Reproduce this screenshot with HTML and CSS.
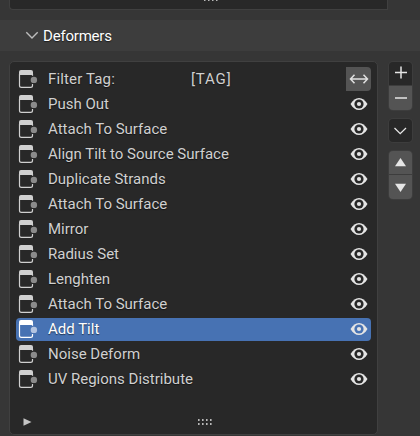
FILE: index.html
```
<!DOCTYPE html>
<html lang="en">
<head>
<meta charset="utf-8">
<title>Deformers</title>
<link rel="stylesheet" href="styles.css">
</head>
<body>
<svg class="defs" aria-hidden="true">
  <symbol id="node" viewBox="0 0 20 20">
    <path d="M1 6V3Q1 1 3 1H13Q15 1 15 3V6Z" fill="currentColor"/>
    <path d="M1.500 5V16.500Q1.500 18.400 3.400 18.400H12.600Q14.500 18.400 14.500 16.500V15M14.500 5v1.800" fill="none" stroke="currentColor" stroke-width="1.200"/>
    <circle class="socket" cx="15.900" cy="10.900" r="3.200"/>
  </symbol>
  <symbol id="eye" viewBox="0 0 18 14">
    <path d="M.5 7C3 3 5.600 1 9 1s6 2 8.500 6C15 11 12.400 13 9 13S3 11 .5 7Z" fill="currentColor"/>
    <circle class="hole" cx="9" cy="7" r="4.600"/>
    <circle cx="9" cy="7" r="2.100" fill="currentColor"/>
  </symbol>
</svg>
<div class="previous"><div class="previous-box"><svg class="grip" viewBox="0 0 14 6"><path d="M0 4h1.500v2H0zM4 4h1.500v2H4zM8 4h1.500v2H8zM12 4h1.500v2h-1.500z"/></svg></div></div>
<header class="header">
  <svg class="caret" viewBox="0 0 14 9"><path d="M1.300 1.300 7 7 12.700 1.300"/></svg>
  <span class="title">Deformers</span>
</header>
<main class="panel">
  <section class="list">
    <div class="rows">
      <div class="row"><svg class="node"><use href="#node"/></svg><span class="name filter">Filter Tag:</span><span class="tag">[TAG]</span><button class="swap"><svg viewBox="0 0 20 12"><path d="M1.500 6H18.500M5.500 1.800 1.500 6l4 4.200M14.500 1.800l4 4.200-4 4.200"/></svg></button></div>
      <div class="row"><svg class="node"><use href="#node"/></svg><span class="name">Push Out</span><svg class="eye"><use href="#eye"/></svg></div>
      <div class="row"><svg class="node"><use href="#node"/></svg><span class="name">Attach To Surface</span><svg class="eye"><use href="#eye"/></svg></div>
      <div class="row"><svg class="node"><use href="#node"/></svg><span class="name">Align Tilt to Source Surface</span><svg class="eye"><use href="#eye"/></svg></div>
      <div class="row"><svg class="node"><use href="#node"/></svg><span class="name">Duplicate Strands</span><svg class="eye"><use href="#eye"/></svg></div>
      <div class="row"><svg class="node"><use href="#node"/></svg><span class="name">Attach To Surface</span><svg class="eye"><use href="#eye"/></svg></div>
      <div class="row"><svg class="node"><use href="#node"/></svg><span class="name">Mirror</span><svg class="eye"><use href="#eye"/></svg></div>
      <div class="row"><svg class="node"><use href="#node"/></svg><span class="name">Radius Set</span><svg class="eye"><use href="#eye"/></svg></div>
      <div class="row"><svg class="node"><use href="#node"/></svg><span class="name">Lenghten</span><svg class="eye"><use href="#eye"/></svg></div>
      <div class="row"><svg class="node"><use href="#node"/></svg><span class="name">Attach To Surface</span><svg class="eye"><use href="#eye"/></svg></div>
      <div class="row selected"><svg class="node"><use href="#node"/></svg><span class="name">Add Tilt</span><svg class="eye"><use href="#eye"/></svg></div>
      <div class="row"><svg class="node"><use href="#node"/></svg><span class="name">Noise Deform</span><svg class="eye"><use href="#eye"/></svg></div>
      <div class="row"><svg class="node"><use href="#node"/></svg><span class="name">UV Regions Distribute</span><svg class="eye"><use href="#eye"/></svg></div>
    </div>
    <footer class="foot">
      <svg class="play" viewBox="0 0 9 8"><path d="M.5.300 8.500 4 .5 7.700Z"/></svg>
      <svg class="grip" viewBox="0 0 14 6"><path d="M0 0h1.600v2H0zM4 0h1.600v2H4zM8 0h1.600v2H8zM12 0h1.600v2h-1.600zM0 4h1.600v2H0zM4 4h1.600v2H4zM8 4h1.600v2H8zM12 4h1.600v2h-1.600z"/></svg>
    </footer>
  </section>
  <aside class="tools">
    <div class="group">
      <button class="dark"><svg viewBox="0 0 23 23"><path class="line" d="M6 10.500H18M12 4.500v12"/></svg></button>
      <button><svg viewBox="0 0 23 23"><path class="line" d="M6 11H18"/></svg></button>
    </div>
    <div class="group"><button class="dark"><svg viewBox="0 0 23 23"><path class="line thin" d="M5.500 9 11.200 14.700 17 9"/></svg></button></div>
    <div class="group">
      <button><svg viewBox="0 0 23 23"><path class="solid" d="M11.500 7 17 15.200H6Z"/></svg></button>
      <button><svg viewBox="0 0 23 23"><path class="solid" d="M11.500 16 6 7.800H17Z"/></svg></button>
    </div>
  </aside>
</main>
</body>
</html>
```
FILE: styles.css
```
* { box-sizing: border-box; }
body {
  margin: 0;
  height: 436px;
  overflow: hidden;
  background: #363636;
  color: #d0d0d0;
  font: 15px/21px Roboto, "Liberation Sans", sans-serif;
}
svg { display: block; flex: none; }
.defs { position: absolute; width: 0; height: 0; }
button { display: block; margin: 0; padding: 0; border: 0; background: #545454; }
.previous { height: 20px; padding-left: 9px; }
.previous-box {
  width: 379px;
  height: 10px;
  background: #282828;
  border: 1px solid #404040;
  border-top: 0;
  border-radius: 0 0 0 4px;
  overflow: hidden;
}
.previous-box .grip { margin: -5px 0 0 194px; }
.header {
  display: flex;
  align-items: center;
  height: 31px;
  padding-left: 25px;
  background: #3d3d3d;
  color: #fff;
  letter-spacing: -.2px;
  text-shadow: 0 1px 1px #0008;
}
.title { margin-top: 2px; }
.caret { width: 14px; height: 9px; margin-right: 4px; }
.caret path { fill: none; stroke: #bdbdbd; stroke-width: 1.4; }
.panel { display: flex; gap: 11px; padding: 10px 0 0 9px; }
.list {
  width: 369px;
  height: 374px;
  padding: 6px 6px 0;
  background: #282828;
  border: 1px solid #404040;
  border-radius: 5px;
}
.rows { display: flex; flex-direction: column; gap: 2px; }
.row {
  --hole: #282828;
  --socket: #8b8b8b;
  display: flex;
  align-items: center;
  height: 23px;
  padding: 0 0 2px 2px;
  border-radius: 4px;
  text-shadow: 0 1px 1px #0008;
}
.node { width: 20px; height: 20px; margin: 1px 10px 0 0; color: #d0d0d0; }
.socket { fill: var(--socket); }
.hole { fill: var(--hole); }
.name { flex: 1; margin-top: 2px; white-space: nowrap; }
.filter { flex: 0 0 143px; letter-spacing: .15px; }
.tag { flex: 1; margin-top: 2px; letter-spacing: .85px; }
.eye { width: 18px; height: 14px; margin-right: 3px; color: #e4e4e4; }
.swap {
  display: grid;
  place-items: center;
  width: 25px;
  height: 24px;
  margin-top: 1px;
  border-radius: 0 4px 4px 0;
}
.swap svg { width: 20px; height: 12px; }
.swap path { fill: none; stroke: #e0e0e0; stroke-width: 1.5; }
.selected {
  --hole: #4772b3;
  --socket: #b3c4e1;
  background: #4772b3;
  color: #fff;
}
.selected .node { color: #fff; }
.foot { display: flex; align-items: center; height: 8px; margin-top: 27px; padding-left: 7px; }
.play { width: 9px; height: 8px; fill: #c4c4c4; }
.grip { width: 14px; height: 6px; fill: #b8b8b8; }
.foot .grip { margin: 0 0 0 166px; }
.tools { display: flex; flex-direction: column; gap: 9px; padding-top: 1px; }
.group {
  display: flex;
  flex-direction: column;
  gap: 1px;
  width: 23px;
  border-radius: 4px;
  overflow: hidden;
  background: #3d3d3d;
  box-shadow: 0 0 0 1px #3d3d3d;
}
.group button { width: 23px; height: 23px; }
.group button + button { height: 24px; }
.group svg { width: 23px; height: 23px; }
.group .dark { background: #282828; }
.line { fill: none; stroke: #e6e6e6; stroke-width: 1.5; }
.thin { stroke-width: 1.3; }
.solid { fill: #e6e6e6; }
```
